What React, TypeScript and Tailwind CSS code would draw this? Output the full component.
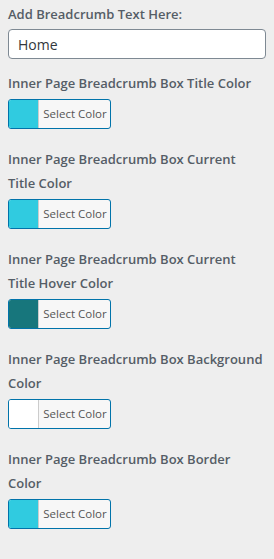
import React from 'react';

const font = { fontFamily: '"Open Sans", "Noto Sans", sans-serif' };

type Picker = { label: string; color: string };

const pickers: Picker[] = [
  { label: 'Inner Page Breadcrumb Box Title Color', color: '#30cbe0' },
  { label: 'Inner Page Breadcrumb Box Current Title Color', color: '#30cbe0' },
  { label: 'Inner Page Breadcrumb Box Current Title Hover Color', color: '#17767c' },
  { label: 'Inner Page Breadcrumb Box Background Color', color: '#ffffff' },
  { label: 'Inner Page Breadcrumb Box Border Color', color: '#30cbe0' },
];

function ColorButton({ color }: { color: string }) {
  return (
    <button
      type="button"
      className="flex h-[30px] w-[103px] overflow-hidden rounded-[3px] border border-[#0073aa] bg-[#f7f7f7] p-0"
    >
      <span className="h-full w-[30px] border-r border-[#ccc]" style={{ backgroundColor: color }} />
      <span className="flex h-full flex-1 items-center justify-center pl-[1px] text-[11.5px] text-[#555]">
        Select Color
      </span>
    </button>
  );
}

export default function App() {
  return (
    <div className="min-h-[559px] w-[274px] bg-[#eeeeee] px-2 pt-[2px]" style={font}>
      <label className="block text-[13px] font-semibold leading-6 text-[#555d66]">
        Add Breadcrumb Text Here:
      </label>
      <input
        type="text"
        defaultValue="Home"
        className="mt-[3px] block h-[30px] w-[258px] rounded-[4px] border border-[#7e8993] bg-white px-[9px] text-[14px] text-[#32373c] outline-none"
        style={font}
      />
      <div className="mt-[12px] flex flex-col gap-[18px]">
        {pickers.map((p) => (
          <div key={p.label}>
            <label className="mb-[4px] block text-[13px] font-semibold leading-6 text-[#555d66]">
              {p.label}
            </label>
            <ColorButton color={p.color} />
          </div>
        ))}
      </div>
    </div>
  );
}
